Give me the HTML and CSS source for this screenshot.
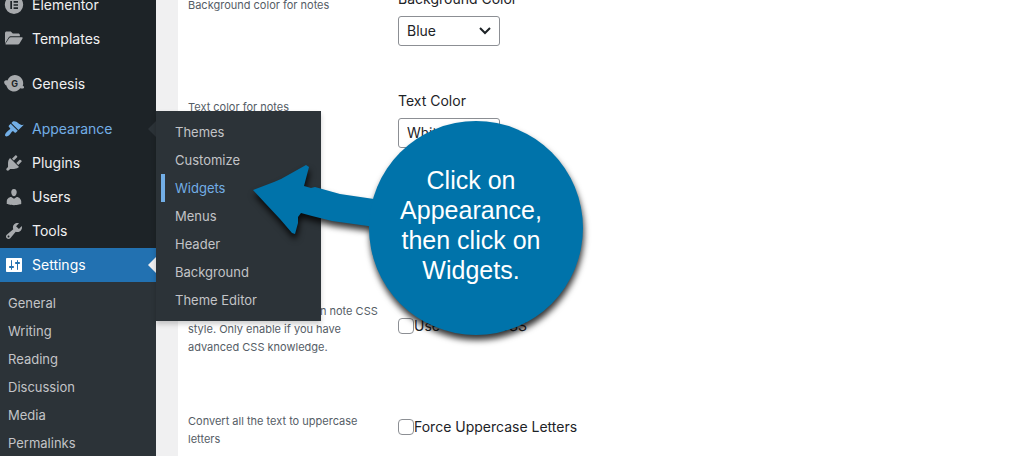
FILE: index.html
```html
<!DOCTYPE html>
<html lang="en">
<head>
  <meta charset="UTF-8">
  <title>Settings</title>
  <link rel="stylesheet" href="styles.css">
</head>
<body>
  <div class="layout">
    <nav class="sidebar">
      <ul class="menu">
        <li><a href="#" class="menu-link">
          <svg class="icon" viewBox="0 0 20 20"><path fill-rule="evenodd" d="M10 .5a9.200 9.200 0 1 0 0 18.400a9.200 9.200 0 0 0 0-18.400zM6.300 6h1.700v8H6.300zM9.600 6h4.400v1.700H9.600zM9.600 9.200h4.400v1.600H9.600zM9.600 12.300h4.400V14H9.600z"/></svg>
          Elementor</a></li>
        <li class="group-end"><a href="#" class="menu-link">
          <svg class="icon" viewBox="0 0 20 20"><path d="M1 14.500V4.200C1 3.200 1.700 2.500 2.600 2.500h4.200l2 2h5.400c1 0 1.700.7 1.700 1.700v1H7.200c-1.200 0-2 .4-2.600 1.400z"/><path d="M7.600 8.300h10.200c.7 0 1 .6.700 1.100l-3 5.200c-.4.700-1 1-1.700 1H2.200c-.6 0-.9-.5-.6-1l3.300-5.200c.6-.8 1.400-1.100 2.700-1.100z"/></svg>
          Templates</a></li>
        <li class="group-end"><a href="#" class="menu-link">
          <svg class="icon" viewBox="0 0 20 20"><path d="M.4 7.200c.6-1 1.800-1.100 3-.8C4.800 3.200 7.400 1 10.800 1c4.800 0 8.400 3.700 8.400 8.200 0 1-.2 1.900-.5 2.700 1.200.3 1.700.9 1.400 1.700-.5 1-2.200 1.300-3.900.7-1.400 1.900-3.300 3.300-6 3.300-4 0-7-2.600-7.800-6C.8 10.500-.4 8.700.4 7.200z"/><text class="icon-letter" x="10.700" y="13" text-anchor="middle">G</text></svg>
          Genesis</a></li>
        <li class="open"><a href="#" class="menu-link">
          <svg class="icon" viewBox="0 0 20 20"><path d="M14.480 11.060L7.410 3.990l1.500-1.500c.5-.56 2.300-.47 3.510.32 1.210.8 1.430 1.280 2.910 2.100 1.180.64 2.450 1.260 4.450.85zm-.71.71L6.700 4.700 4.930 6.470c-.39.39-.39 1.020 0 1.410l1.060 1.060c.39.39.39 1.030 0 1.420-.6.6-1.430 1.110-2.210 1.690-.35.26-.7.53-1.010.84C1.430 14.230.4 16.080 1.400 17.070c.99 1 2.840-.03 4.180-1.360.31-.31.58-.66.850-1.020.57-.78 1.080-1.610 1.690-2.210.39-.39 1.020-.39 1.410 0l1.060 1.060c.39.39 1.020.39 1.410 0z"/></svg>
          Appearance</a>
          <ul class="flyout">
            <li><a href="#">Themes</a></li>
            <li><a href="#">Customize</a></li>
            <li><a href="#" class="active">Widgets</a></li>
            <li><a href="#">Menus</a></li>
            <li><a href="#">Header</a></li>
            <li><a href="#">Background</a></li>
            <li><a href="#">Theme Editor</a></li>
          </ul>
        </li>
        <li><a href="#" class="menu-link">
          <svg class="icon" viewBox="0 0 20 20"><path d="M13.110 4.360L9.870 7.600 8 5.730l3.240-3.240c.35-.34 1.050-.2 1.560.32.52.51.66 1.210.31 1.550zm-8 1.770l.91-1.120 9.010 9.010-1.190.84c-.71.71-2.630 1.160-3.820 1.160H6.140L4.900 17.260c-.59.59-1.540.59-2.120 0-.59-.58-.59-1.530 0-2.120l1.240-1.240v-3.880c0-1.130.4-3.190 1.090-3.890zm7.260 3.970l3.240-3.240c.34-.35 1.040-.21 1.550.31.52.51.66 1.210.31 1.550l-3.240 3.250z"/></svg>
          Plugins</a></li>
        <li><a href="#" class="menu-link">
          <svg class="icon" viewBox="0 0 20 20"><path d="M10 9.250c-2.270 0-2.730-3.440-2.730-3.440C7 4.020 7.820 2 9.970 2c2.160 0 2.980 2.020 2.710 3.810 0 0-.41 3.440-2.680 3.440zm0 2.570L12.720 10c2.390 0 4.520 2.330 4.520 4.530v2.490s-3.650 1.130-7.240 1.130c-3.650 0-7.240-1.130-7.240-1.130v-2.490c0-2.250 1.940-4.480 4.470-4.480z"/></svg>
          Users</a></li>
        <li><a href="#" class="menu-link">
          <svg class="icon" viewBox="0 0 20 20"><path d="M16.680 9.770c-1.340 1.340-3.300 1.670-4.950.99l-5.410 6.520c-.99.99-2.590.99-3.580 0s-.99-2.590 0-3.570l6.520-5.420c-.68-1.650-.35-3.610.99-4.950 1.280-1.280 3.120-1.620 4.720-1.060l-2.890 2.890 2.820 2.820 2.860-2.870c.53 1.580.18 3.390-1.080 4.650zM3.810 16.210c.4.39 1.040.39 1.430 0 .4-.4.4-1.040 0-1.430-.39-.4-1.030-.4-1.430 0-.39.39-.39 1.030 0 1.430z"/></svg>
          Tools</a></li>
        <li class="current"><a href="#" class="menu-link">
          <svg class="icon" viewBox="0 0 20 20"><path d="M18 16V4c0-.55-.45-1-1-1H3c-.55 0-1 .45-1 1v12c0 .55.45 1 1 1h14c.55 0 1-.45 1-1zM8 11h1c.55 0 1 .45 1 1s-.45 1-1 1H8v1.500c0 .28-.22.5-.5.5s-.5-.22-.5-.5V13H6c-.55 0-1-.45-1-1s.45-1 1-1h1V5.500c0-.28.22-.5.5-.5s.5.22.5.5V11zm5-2h-1c-.55 0-1-.45-1-1s.45-1 1-1h1V5.500c0-.28.22-.5.5-.5s.5.22.5.5V7h1c.55 0 1 .45 1 1s-.45 1-1 1h-1v5.500c0 .28-.22.5-.5.5s-.5-.22-.5-.5V9z"/></svg>
          Settings</a>
        </li>
      </ul>
      <ul class="submenu">
        <li><a href="#">General</a></li>
        <li><a href="#">Writing</a></li>
        <li><a href="#">Reading</a></li>
        <li><a href="#">Discussion</a></li>
        <li><a href="#">Media</a></li>
        <li><a href="#">Permalinks</a></li>
      </ul>
    </nav>

    <main class="content">
      <form class="settings">
        <div class="row">
          <p class="desc">Background color for notes</p>
          <div class="field">
            <label for="bg-color">Background Color</label>
            <select id="bg-color">
              <option>Blue</option>
              <option>White</option>
            </select>
          </div>
        </div>
        <div class="row">
          <p class="desc">Text color for notes</p>
          <div class="field">
            <label for="text-color">Text Color</label>
            <select id="text-color">
              <option>White</option>
              <option>Blue</option>
            </select>
          </div>
        </div>
        <div class="row"></div>
        <div class="row check-row">
          <p class="desc">Overrides all of the built-in note CSS style. Only enable if you have advanced CSS knowledge.</p>
          <div class="check">
            <input type="checkbox" id="custom-css">
            <label for="custom-css">Use Custom CSS</label>
          </div>
        </div>
        <div class="row check-row">
          <p class="desc">Convert all the text to uppercase letters</p>
          <div class="check">
            <input type="checkbox" id="uppercase">
            <label for="uppercase">Force Uppercase Letters</label>
          </div>
        </div>
      </form>
    </main>
  </div>

  <div class="callout">
    <svg class="callout-shape" viewBox="0 0 332 216">
      <path d="M1 70 L22 62 29 59 54 45 57 47 52 66 59 68 63 67 88 74 122 79 140 80 140 111 116 106 80 101 60 96 49 93 46 97 46 103 43 114 40 113 28 99 13 83z"/>
      <circle cx="224" cy="108" r="107"/>
    </svg>
    <p class="callout-text">Click on<br>Appearance,<br>then click on<br>Widgets.</p>
  </div>
</body>
</html>
```

FILE: styles.css
```css
* {
  box-sizing: border-box;
}
body {
  margin: 0;
  height: 100vh;
  overflow: hidden;
  background: #f0f0f1;
  color: #1d2327;
  font-family: Inter, "Liberation Sans", sans-serif;
  font-size: 14px;
  line-height: 20px;
}
ul {
  list-style: none;
  margin: 0;
  padding: 0;
}
a {
  color: inherit;
  text-decoration: none;
}
.layout {
  display: flex;
  height: 100vh;
}

/* admin menu */
.sidebar {
  width: 156px;
  flex-shrink: 0;
  margin-top: -12px;
  background: #1d2327;
  color: #f0f0f1;
}
.menu li {
  position: relative;
}
.menu-link {
  display: flex;
  align-items: center;
  gap: 8px;
  height: 34px;
  padding-left: 4px;
}
.icon {
  width: 20px;
  height: 20px;
  fill: #a7aaad;
}
.icon-letter {
  fill: #1d2327;
  font-size: 9px;
  font-weight: 700;
}
.menu .group-end {
  margin-bottom: 11px;
}
.open > .menu-link {
  color: #72aee6;
}
.open .icon {
  fill: #72aee6;
}
.current {
  background: #2271b1;
  color: #fff;
}
.current .icon {
  fill: #fff;
}
.open::after,
.current::after {
  content: "";
  position: absolute;
  top: 9px;
  right: 0;
  border: 8px solid transparent;
  border-left-width: 0;
  border-right-color: #f0f0f1;
}
.open::after {
  border-right-color: #2c3338;
}
.submenu,
.flyout {
  padding: 7px 0;
  background: #2c3338;
  color: #c3c4c7;
  font-size: 13px;
}
.submenu a,
.flyout a {
  display: block;
  padding: 4px 8px;
}
.flyout {
  position: absolute;
  top: -1px;
  left: 100%;
  width: 165px;
  z-index: 1;
  box-shadow: 0 3px 5px rgba(0, 0, 0, 0.2);
}
.flyout a {
  margin-left: 5px;
  padding-left: 14px;
}
.flyout .active {
  color: #72aee6;
  box-shadow: inset 4px 0 0 #72aee6;
}

/* settings form */
.content {
  flex: 1;
  margin-left: 22px;
  padding-left: 10px;
  background: #fff;
}
.settings {
  margin-top: -11px;
}
.row {
  display: grid;
  grid-template-columns: 194px 1fr;
  column-gap: 16px;
  align-items: start;
  min-height: 102px;
}
.desc {
  margin: 7px 0 0;
  color: #555d66;
  font-size: 11px;
  line-height: 18px;
}
.field {
  display: flex;
  flex-direction: column;
  align-items: flex-start;
  gap: 7px;
}
.field select {
  appearance: none;
  width: 102px;
  height: 30px;
  padding: 0 8px;
  border: 1px solid #8c8f94;
  border-radius: 3px;
  background: #fff url('data:image/svg+xml,<svg xmlns="http://www.w3.org/2000/svg" viewBox="0 0 12 8"><path d="M1 1l5 5 5-5" fill="none" stroke="%231d2327" stroke-width="2"/></svg>') no-repeat right 8px center / 12px 8px;
  color: #1d2327;
  font: inherit;
}
.check-row {
  align-items: center;
  min-height: 0;
  padding-bottom: 49px;
}
.check-row .desc {
  padding-right: 2px;
}
.check {
  display: flex;
  align-items: center;
  padding-top: 1px;
}
.check input {
  appearance: none;
  width: 16px;
  height: 16px;
  margin: 0;
  border: 1px solid #8c8f94;
  border-radius: 4px;
  background: #fff;
}

/* callout bubble */
.callout {
  position: absolute;
  top: 120px;
  left: 252px;
  width: 332px;
  z-index: 2;
}
.callout-shape {
  display: block;
  overflow: visible;
  fill: #0073aa;
  filter: drop-shadow(1px 5px 3px rgba(0, 0, 0, 0.8));
}
.callout-text {
  position: absolute;
  top: 45px;
  right: 28px;
  width: 170px;
  margin: 0;
  color: #fff;
  font-family: "Liberation Sans", Arial, sans-serif;
  font-size: 25px;
  line-height: 30px;
  text-align: center;
}
```
